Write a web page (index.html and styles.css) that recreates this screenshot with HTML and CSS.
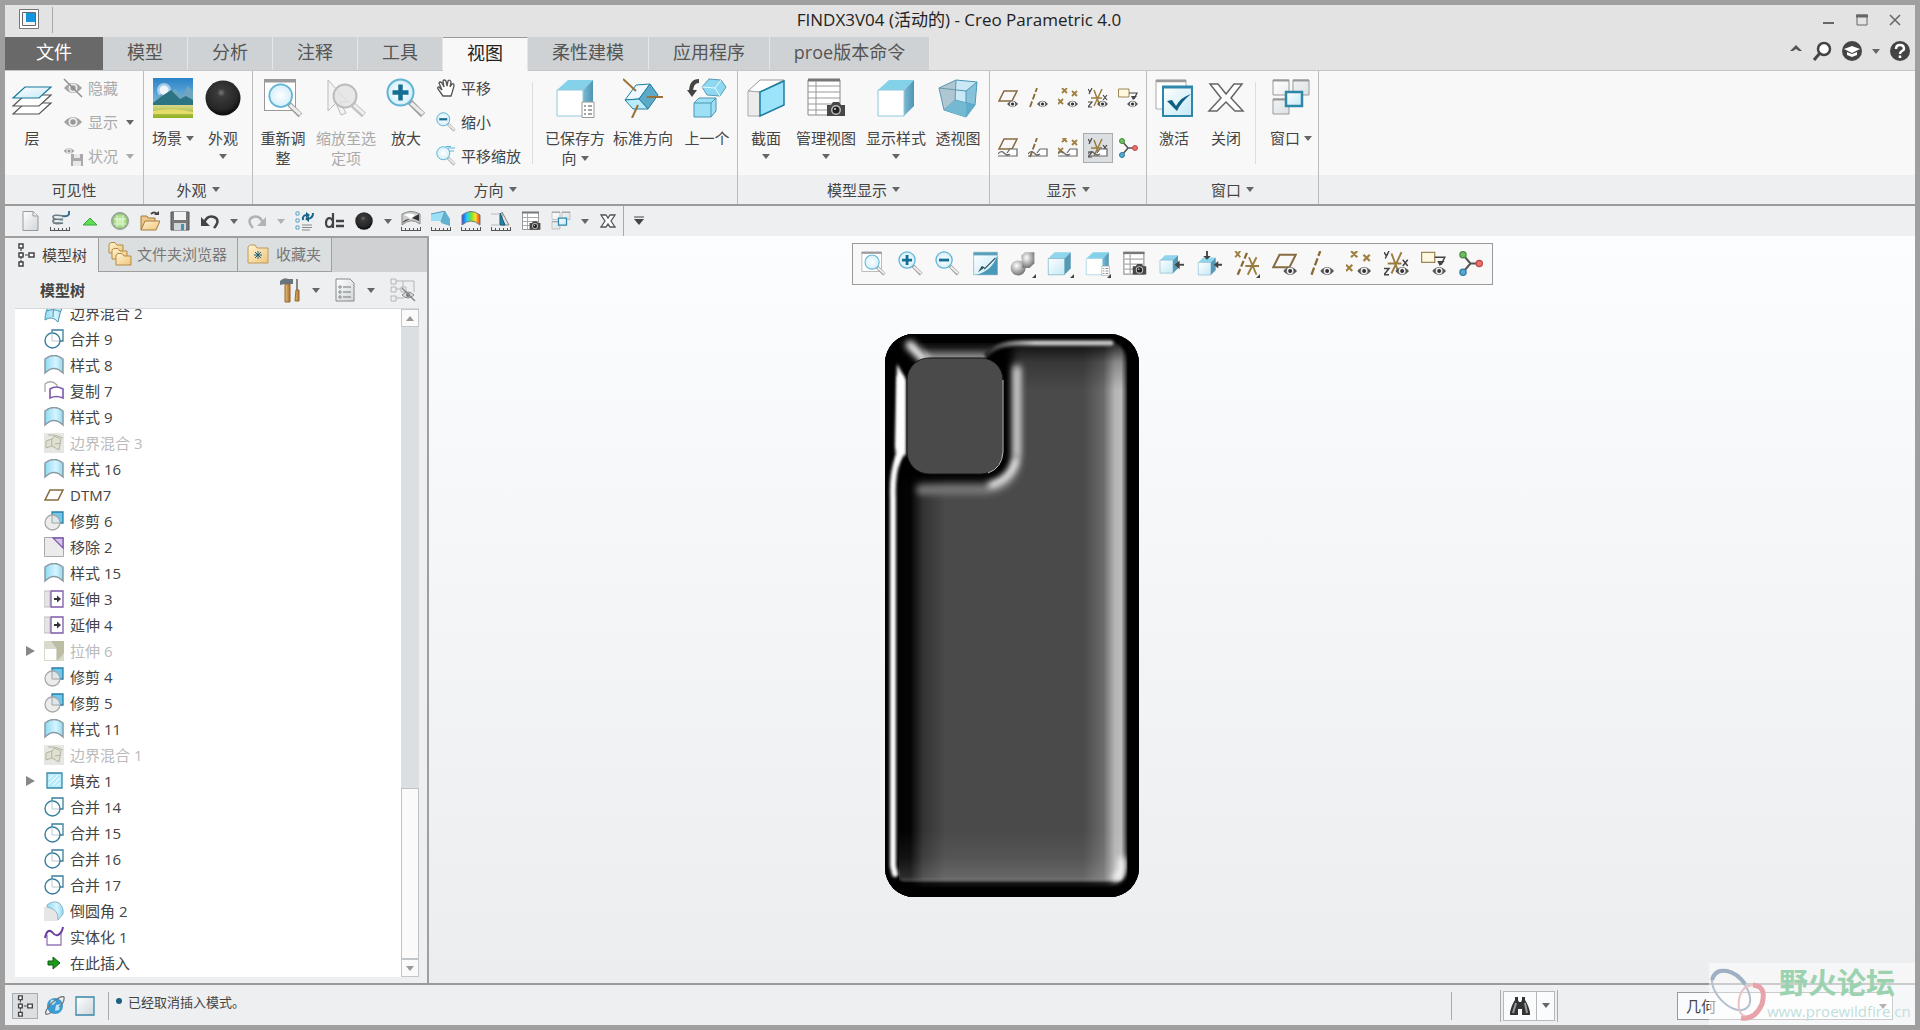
FILE: index.html
```html
<!DOCTYPE html>
<html lang="zh-CN">
<head>
    <meta charset="UTF-8">
    <meta name="viewport" content="width=device-width, initial-scale=1.0">
    <title>FINDX3V04 (活动的) - Creo Parametric 4.0</title>
    <link rel="stylesheet" href="styles.css">
</head>
<body>

<!-- icon sprite -->
<svg class="sprite" aria-hidden="true">
    <defs>
        <linearGradient id="g-blue" x1="0" y1="0" x2="1" y2="1"><stop offset="0" stop-color="#7fcfec"/><stop offset="1" stop-color="#e4f8ff"/></linearGradient>
        <linearGradient id="g-pale" x1="0" y1="0" x2="1" y2="1"><stop offset="0" stop-color="#fff"/><stop offset="1" stop-color="#c4e8f6"/></linearGradient>
        <linearGradient id="g-side" x1="0" y1="0" x2="1" y2="0"><stop offset="0" stop-color="#7db9d2"/><stop offset="1" stop-color="#4b95b5"/></linearGradient>
        <linearGradient id="g-page" x1="0" y1="0" x2="1" y2="1"><stop offset="0" stop-color="#fff"/><stop offset="1" stop-color="#cfd6db"/></linearGradient>
        <linearGradient id="g-sky" x1="0" y1="0" x2="0" y2="1"><stop offset="0" stop-color="#2b83c6"/><stop offset="1" stop-color="#a8d8f2"/></linearGradient>
        <linearGradient id="g-grass" x1="0" y1="0" x2="0" y2="1"><stop offset="0" stop-color="#d9d98a"/><stop offset="1" stop-color="#8fb020"/></linearGradient>
        <linearGradient id="g-rain" x1="0" y1="0" x2="1" y2="0"><stop offset="0" stop-color="#2a45ff"/><stop offset=".3" stop-color="#22d4f0"/><stop offset=".5" stop-color="#6de23c"/><stop offset=".75" stop-color="#ffe11a"/><stop offset="1" stop-color="#f0352a"/></linearGradient>
        <linearGradient id="g-wood" x1="0" y1="0" x2="1" y2="0"><stop offset="0" stop-color="#e9bf7c"/><stop offset="1" stop-color="#a8702a"/></linearGradient>
        <linearGradient id="g-folder" x1="0" y1="0" x2="1" y2="1"><stop offset="0" stop-color="#fff3d2"/><stop offset="1" stop-color="#efc67c"/></linearGradient>
        <linearGradient id="g-style" x1="0" y1="0" x2="1" y2="0"><stop offset="0" stop-color="#8edaf3"/><stop offset=".6" stop-color="#d8f5ff"/><stop offset="1" stop-color="#8edaf3"/></linearGradient>
        <radialGradient id="g-ball" cx=".45" cy=".35" r=".6"><stop offset="0" stop-color="#777"/><stop offset=".2" stop-color="#3a3a3a"/><stop offset=".8" stop-color="#262626"/><stop offset="1" stop-color="#111"/></radialGradient>
        <radialGradient id="g-green"><stop offset="0" stop-color="#d9f5bd"/><stop offset=".7" stop-color="#a3dc85"/><stop offset="1" stop-color="#8f9c8a"/></radialGradient>
        <radialGradient id="g-lens"><stop offset="0" stop-color="#fff"/><stop offset="1" stop-color="#d4effa"/></radialGradient>
        <radialGradient id="g-metal" cx=".4" cy=".35" r=".7"><stop offset="0" stop-color="#fff"/><stop offset="1" stop-color="#6d6d6d"/></radialGradient>
    </defs>

    <!-- shared parts -->
    <symbol id="p-eye" viewBox="0 0 12 8"><path d="M0 4Q6-3 12 4Q6 11 0 4z" fill="#555"/><circle cx="6" cy="4" r="3" fill="#eee"/><circle cx="6" cy="4" r="1.7" fill="#333"/></symbol>
    <symbol id="p-tag" viewBox="0 0 20 10"><path d="M9 8H19V1H12L9 5z" fill="#fff"/><path d="M0 6Q3 2 6 5T12 6M0 8H19V1H12L9 5" fill="none" stroke="#666" stroke-width="1.200"/></symbol>
    <symbol id="p-ruler" viewBox="0 0 20 4"><path d="M0 3.500H20M.5 0V4M4.500 1V4M8.500 1V4M12.500 1V4M16.500 1V4M19.500 0V4" stroke="#555" fill="none"/></symbol>
    <symbol id="p-cam" viewBox="0 0 20 16"><path d="M1 4H5L7 1H13L15 4H19V15H1z" fill="#484848"/><circle cx="10" cy="9" r="5" fill="#bbb"/><circle cx="10" cy="9" r="3.500" fill="#222"/><circle cx="9" cy="8" r="1" fill="#ddd"/></symbol>

    <!-- ribbon, large -->
    <symbol id="i-layers" viewBox="0 0 40 40"><g stroke="#555" stroke-width="1.200"><path d="M1 36L13 25H39L27 36z" fill="#fff"/><path d="M1 28L13 17H39L27 28z" fill="#fff"/><path d="M1 20L13 9H39L27 20z" fill="url(#g-pale)" stroke="#16789c"/></g></symbol>
    <symbol id="i-scene" viewBox="0 0 40 40"><rect width="40" height="40" fill="url(#g-sky)"/><circle cx="11" cy="12" r="7" fill="#fff" opacity=".5"/><circle cx="11" cy="12" r="4.500" fill="#fff" opacity=".8"/><path d="M0 24L8 16L14 20L22 11L29 18L35 8L40 13V28H0z" fill="#6fa5c0"/><path d="M0 25L9 18L18 12L27 21L33 18L40 22V30H0z" fill="#2c7384"/><rect y="27" width="40" height="13" fill="url(#g-grass)"/><path d="M0 33Q20 29 40 34V36H0z" fill="#e5dc6a"/></symbol>
    <symbol id="i-ball" viewBox="0 0 40 40"><circle cx="20" cy="20" r="17.500" fill="url(#g-ball)"/></symbol>
    <symbol id="i-glass" viewBox="0 0 40 40"><path d="M24 24L37 37" stroke="#999" stroke-width="6"/><path d="M25 25L37 36" stroke="#ececec" stroke-width="3.500"/><circle cx="14.500" cy="14.500" r="13" fill="url(#g-lens)" stroke="#62b4d4" stroke-width="2"/></symbol>
    <symbol id="i-refit" viewBox="0 0 40 40"><rect x="1.500" y="1.500" width="31" height="31" fill="#fff" stroke="#999"/><path d="M1 3H33" stroke="#999" stroke-width="3"/><use href="#i-glass" x="5" y="5" width="35" height="35"/></symbol>
    <symbol id="i-zoomsel" viewBox="0 0 40 40"><path d="M2 2V33L10 25L15 37L20 35L14 24H22z" fill="#f3f3f3" stroke="#bbb"/><path d="M27 27L38 37" stroke="#c2c2c2" stroke-width="6"/><path d="M28 27L38 36" stroke="#f0f0f0" stroke-width="3"/><circle cx="19" cy="18" r="11.500" fill="#e2e2e2" fill-opacity=".8" stroke="#bbb" stroke-width="2"/></symbol>
    <symbol id="i-zoomin" viewBox="0 0 40 40"><use href="#i-glass" width="40" height="40"/><path d="M14.500 6.500V22.500M6.500 14.500H22.500" stroke="#146f93" stroke-width="4.500"/></symbol>
    <symbol id="i-zoomout" viewBox="0 0 40 40"><use href="#i-glass" width="40" height="40"/><path d="M6.500 14.500H22.500" stroke="#146f93" stroke-width="4.500"/></symbol>
    <symbol id="i-panzoom" viewBox="0 0 40 40"><use href="#i-glass" width="40" height="40"/><path d="M24 4H38M27 10H36M20 1H30" stroke="#5bb1d8" stroke-width="2"/></symbol>
    <symbol id="i-cube" viewBox="0 0 40 40"><path d="M2 12L13 2H38L28 12z" fill="#84d1ea"/><path d="M28 12L38 2V28L28 38z" fill="url(#g-side)"/><path d="M2 12H28V38H2z" fill="#fff" stroke="#8fc9de"/></symbol>
    <symbol id="i-saved" viewBox="0 0 40 40"><use href="#i-cube" width="40" height="40"/><path d="M27 24H39V39.500H27z" fill="#fff" stroke="#999"/><path d="M29 28H31M33 28H37M29 32H31M33 32H37M29 36H31M33 36H37" stroke="#888" stroke-width="1.500"/></symbol>
    <symbol id="i-orient" viewBox="0 0 40 40"><path d="M2 22L13 7L27 6L16 21z" fill="#eefaff" stroke="#1c7fa3"/><path d="M16 21L27 6L35 17L25 31z" fill="#5da9c8" stroke="#1c7fa3"/><path d="M2 22L16 21L25 31L10 31z" fill="#b9ebfa" stroke="#1c7fa3"/><path d="M0 1L13 13M24 19H40M15 27L9 40" stroke="#9a7236" stroke-width="2"/></symbol>
    <symbol id="i-prev" viewBox="0 0 40 40"><path d="M12 3Q4 3 4 14" fill="none" stroke="#444" stroke-width="4"/><path d="M0 12H10L5 19z" fill="#444"/><path d="M15 9L22 1L34 2L39 9L33 18L20 17z" fill="#8fd8f2" stroke="#5a9ab5"/><path d="M15 9L28 10L34 2M28 10L33 18" fill="none" stroke="#e8faff"/><path d="M7 25L12 20H29V33L24 39H7z" fill="#9ddff5" stroke="#4b95b5"/><path d="M7 25H24L29 20M24 25V39" stroke="#4b95b5" fill="none"/></symbol>
    <symbol id="i-section" viewBox="0 0 40 40"><path d="M2 13L14 2H38L14 14z" fill="#fff" stroke="#999"/><path d="M2 13L14 14V38H2z" fill="#ececec" stroke="#aaa"/><path d="M14 14L38 3V27L14 38z" fill="#9be4fa" stroke="#1c7fa3" stroke-width="1.500"/></symbol>
    <symbol id="i-views" viewBox="0 0 40 40"><path d="M2 2H34V37H2z" fill="#fff" stroke="#888"/><path d="M2 2H34" stroke="#777" stroke-width="3"/><path d="M2 8H34M2 14H34M2 20H34M2 26H34M2 32H34M10 3V37" stroke="#999"/><use href="#p-cam" x="20" y="23" width="20" height="16"/></symbol>
    <symbol id="i-viewsmall" viewBox="0 0 20 20"><path d="M1.500 1.500H17.500V18.500H1.500z" fill="#fff" stroke="#999"/><path d="M1 1.500H18" stroke="#777" stroke-width="2"/><path d="M2 6.500H17M2 10.500H17M2 14.500H17M6.500 2V18" stroke="#aaa"/><use href="#p-cam" x="8" y="9" width="12" height="11"/></symbol>
    <symbol id="i-persp" viewBox="0 0 40 40"><path d="M1 10L18 2L39 4L37 27L28 39L6 32z" fill="#cbe9f4" stroke="#4b95b5"/><path d="M1 10L28 13L39 4M28 13V39M18 2L17 22L6 32M17 22L37 27" fill="none" stroke="#4b95b5"/><path d="M1 10L18 2V22L6 32z" fill="#8b9ea8" opacity=".45"/><path d="M6 32L17 22L37 27L28 39z" fill="#74b8d2"/><path d="M28 13L39 4L37 27L28 39z" fill="#4ea3c4" opacity=".55"/></symbol>
    <symbol id="i-activate" viewBox="0 0 40 40"><path d="M2 2H32V31H2z" fill="#fff" stroke="#aaa"/><path d="M2 3H32" stroke="#999" stroke-width="2.500"/><path d="M9 9H38V38H9z" fill="url(#g-pale)" stroke="#2c87a9" stroke-width="2"/><path d="M8 9H39" stroke="#2c87a9" stroke-width="3"/><path d="M13 23L18 22L22 28Q27 19 37 16Q27 24 23 33z" fill="#0d5f87"/></symbol>
    <symbol id="i-close" viewBox="0 0 40 40"><path d="M4 6H12L20 16L28 6H36L25 20L37 33H29L20 24L11 33H3L15 20z" fill="#fff" stroke="#666" stroke-width="1.500"/></symbol>
    <symbol id="i-windows" viewBox="0 0 40 40"><g fill="url(#g-page)" stroke="#999"><path d="M2 2H18V17H2zM22 2H38V17H22zM2 21H18V36H2z"/></g><path d="M2 2.500H18M22 2.500H38M2 21.500H18" stroke="#999" stroke-width="2"/><path d="M15 14H31V28H15z" fill="url(#g-pale)" stroke="#2c87a9" stroke-width="2.500"/></symbol>

    <!-- ribbon, small -->
    <symbol id="i-eye" viewBox="0 0 20 20"><path d="M1 10Q10 0 19 10Q10 20 1 10z" fill="#a2a2a2"/><circle cx="10" cy="10" r="4.500" fill="#eee"/><circle cx="10" cy="10" r="2.700" fill="#999"/></symbol>
    <symbol id="i-eyeoff" viewBox="0 0 20 20"><use href="#i-eye" width="20" height="20"/><path d="M1 1L19 19" stroke="#8c8c8c" stroke-width="1.500"/></symbol>
    <symbol id="i-eyesave" viewBox="0 0 20 20"><use href="#i-eye" x="0" y="-1" width="12" height="12"/><path d="M8 8H20V20H8z" fill="#aaa"/><path d="M11 8H17V12H11zM10 15H18V20H10z" fill="#e8e8e8"/></symbol>
    <symbol id="i-hand" viewBox="0 0 20 20"><path d="M7 18L2 11Q1 9 3 9L6 12L3 5Q4 3 6 5L8 9L7 3Q8 1 10 3L11 8L12 3Q14 1 15 4L14 9L16 6Q18 5 18 8L16 15L15 18z" fill="#fff" stroke="#555" stroke-width="1.300"/></symbol>
    <symbol id="i-plane" viewBox="0 0 20 20"><path d="M1 15L6 5H19L14 15z" fill="none" stroke="#876c43" stroke-width="1.600"/></symbol>
    <symbol id="i-axis" viewBox="0 0 20 20"><path d="M2 19L9 0" stroke="#876830" stroke-width="1.800" stroke-dasharray="6 2"/></symbol>
    <symbol id="i-points" viewBox="0 0 20 20"><path d="M4 0L9 5M9 0L4 5M14 3L19 8M19 3L14 8M0 11L5 16M5 11L0 16" stroke="#a08040" stroke-width="1.800"/></symbol>
    <symbol id="i-csys" viewBox="0 0 20 20"><path d="M3 10H14M6 2L12 18M14 1L6 18" stroke="#9a7d3e" stroke-width="1.500"/><path d="M0 1L2 4M4 0L1 6M15 7L19 12M19 7L15 12M0 14H4L0 19H4" fill="none" stroke="#444" stroke-width="1.200"/></symbol>
    <symbol id="i-planeeye" viewBox="0 0 20 20"><use href="#i-plane" y="-2" width="20" height="20"/><use href="#p-eye" x="9" y="12" width="11" height="8"/></symbol>
    <symbol id="i-axiseye" viewBox="0 0 20 20"><use href="#i-axis" width="20" height="20"/><use href="#p-eye" x="9" y="12" width="11" height="8"/></symbol>
    <symbol id="i-pointeye" viewBox="0 0 20 20"><use href="#i-points" width="20" height="20"/><use href="#p-eye" x="9" y="12" width="11" height="8"/></symbol>
    <symbol id="i-csyseye" viewBox="0 0 20 20"><use href="#i-csys" width="20" height="20"/><use href="#p-eye" x="9" y="12" width="11" height="8"/></symbol>
    <symbol id="i-noteeye" viewBox="0 0 20 20"><path d="M.5 1H11V9H.5z" fill="#fff8df" stroke="#9d865a"/><path d="M11 5H19L16 11" fill="none" stroke="#444" stroke-width="1.200"/><path d="M13 8L19 8L15 12z" fill="#444"/><use href="#p-eye" x="9" y="12" width="11" height="8"/></symbol>
    <symbol id="i-planetag" viewBox="0 0 20 20"><use href="#i-plane" y="-4" width="20" height="20"/><use href="#p-tag" y="10" width="20" height="10"/></symbol>
    <symbol id="i-axistag" viewBox="0 0 20 20"><use href="#i-axis" width="20" height="20"/><use href="#p-tag" y="10" width="20" height="10"/></symbol>
    <symbol id="i-pointtag" viewBox="0 0 20 20"><use href="#i-points" y="-1" width="20" height="20"/><use href="#p-tag" y="10" width="20" height="10"/></symbol>
    <symbol id="i-csystag" viewBox="0 0 20 20"><use href="#i-csys" width="20" height="20"/><use href="#p-tag" y="10" width="20" height="10"/></symbol>
    <symbol id="i-triad" viewBox="0 0 20 20"><path d="M4 3L10 10L4 17M10 10H17" fill="none" stroke="#555" stroke-width="1.600"/><circle cx="4" cy="3" r="2.500" fill="#6fbd63" stroke="#478c3e"/><circle cx="4" cy="17" r="2.500" fill="#57a9cf" stroke="#2f7da0"/><circle cx="17" cy="10" r="2.500" fill="#ee6e6a" stroke="#b84a46"/></symbol>

    <!-- quick access -->
    <symbol id="i-new" viewBox="0 0 20 20"><path d="M3 .5H13L18 5V19.500H3z" fill="url(#g-page)" stroke="#999"/><path d="M13 .5V5H18" fill="#eee" stroke="#999"/></symbol>
    <symbol id="i-spring" viewBox="0 0 20 20"><use href="#p-ruler" y="16" width="20" height="4"/><path d="M19 0V3Q18 6 12 5" fill="none" stroke="#39728c" stroke-width="2"/><path d="M14 5Q3 3 3 6T13 8M13 9Q2 7 3 10.500T13 12H3" fill="none" stroke="#6a7d86" stroke-width="1.600"/></symbol>
    <symbol id="i-up" viewBox="0 0 20 20"><path d="M3 14L10 7L17 14z" fill="#5fdd55" stroke="#36a83c"/></symbol>
    <symbol id="i-greenball" viewBox="0 0 20 20"><circle cx="10" cy="10" r="8.500" fill="url(#g-green)" stroke="#98a295"/><path d="M7 4V16M13 4V16M4 8H16M4 13H16" stroke="#fff" opacity=".45" stroke-width="1.500"/></symbol>
    <symbol id="i-open" viewBox="0 0 20 20"><path d="M1 19V5H7L8 7H15V11" fill="#efc98b" stroke="#a57a3c"/><path d="M1 19L5 10H20L16 19z" fill="url(#g-folder)" stroke="#a57a3c"/><path d="M11 3Q14 0 17 3" fill="none" stroke="#444" stroke-width="1.800"/><path d="M14 4H19V0z" fill="#444"/></symbol>
    <symbol id="i-save" viewBox="0 0 20 20"><path d="M1 1H19V19H1z" fill="#777" stroke="#555"/><path d="M4 1H16V9H4z" fill="#f2f2f2"/><path d="M4 12H16V19H4z" fill="#cfd6da"/><path d="M11 13H14V19H11z" fill="#4192b4"/></symbol>
    <symbol id="i-undo" viewBox="0 0 20 20"><path d="M4 12Q7 4 14 6Q21 9 14 17" fill="none" stroke="currentColor" stroke-width="2.500"/><path d="M1 6V15H10z" fill="currentColor"/></symbol>
    <symbol id="i-regen" viewBox="0 0 20 20"><path d="M2 1H5V4H2zM2 8H5V11H2zM2 15H5V18H2z" fill="#fff" stroke="#5b9fc0"/><path d="M8 14H18M8 16.500H18M8 19H16" stroke="#888"/><path d="M9 9Q8 4 13 4M19 2Q19 7 14 8" fill="none" stroke="#19658a" stroke-width="2"/><path d="M12 1L16 4L12 7zM15 5L11 8L15 11z" fill="#19658a"/></symbol>
    <symbol id="i-deq" viewBox="0 0 20 20"><path d="M9 2V17M9 11Q8 7 5 7Q2 8 2 12T5 16Q8 16 9 12" fill="none" stroke="#444" stroke-width="2.200"/><path d="M12 10H20M12 15H20" stroke="#444" stroke-width="2.400"/></symbol>
    <symbol id="i-an1" viewBox="0 0 20 20"><use href="#p-ruler" y="16" width="20" height="4"/><path d="M1 14V3Q10-2 19 3V13Q10 6 1 14z" fill="#ccc" stroke="#888"/><path d="M3 4Q9 1 14 4L10 8Q6 5 3 4z" fill="#fff"/><path d="M11 7L18 3V10zM1 12Q4 8 9 8L3 11z" fill="#333"/></symbol>
    <symbol id="i-an2" viewBox="0 0 20 20"><use href="#p-ruler" y="16" width="20" height="4"/><path d="M0 3L14 0L10 10H0z" fill="#9be0f7"/><path d="M14 0L19 8V15L10 12z" fill="#62b1d1"/><path d="M0 3L14 0L10 11" fill="none" stroke="#5a9ab5"/></symbol>
    <symbol id="i-an3" viewBox="0 0 20 20"><use href="#p-ruler" y="16" width="20" height="4"/><path d="M1 14V4Q10-3 19 4V14Q10 6 1 14z" fill="url(#g-rain)" stroke="#777"/></symbol>
    <symbol id="i-an4" viewBox="0 0 20 20"><use href="#p-ruler" y="16" width="20" height="4"/><path d="M11 1L18 14H11z" fill="#e3e3e3" stroke="#888"/><path d="M9 2V14H14z" fill="#2384a8" stroke="#125b78"/><path d="M0 3H9M0 14H9" stroke="#bbb"/></symbol>
    <symbol id="i-xsmall" viewBox="0 0 20 20"><path d="M3 4H8L10 7L12 4H17L13 10L17 16H12L10 13L8 16H3L7 10z" fill="#fff" stroke="#555" stroke-width="1.300"/></symbol>

    <!-- graphics toolbar -->
    <symbol id="i-repaint" viewBox="0 0 40 40"><path d="M1 2H39V38H1z" fill="url(#g-pale)" stroke="#7aa9bb"/><path d="M1 2H39V7H1z" fill="#5ba0ba"/><path d="M39 7V38H5Q30 32 39 7z" fill="#4799b8"/><path d="M36 11L18 29" stroke="#274d5b" stroke-width="2"/><path d="M19 26L8 34L14 24z" fill="#274d5b"/></symbol>
    <symbol id="i-shade" viewBox="0 0 40 40"><circle cx="13" cy="27" r="12" fill="url(#g-metal)"/><path d="M18 7L24 2H39V20L31 27H20z" fill="url(#g-metal)"/></symbol>
    <symbol id="i-bluecube" viewBox="0 0 40 40"><path d="M2 12L12 2H38L28 12z" fill="#8ed5ed"/><path d="M28 12L38 2V28L28 38z" fill="#5599b5"/><path d="M2 12H28V38H2z" fill="url(#g-pale)" stroke="#67a6be"/></symbol>
    <symbol id="i-cubein" viewBox="0 0 40 40"><use href="#i-bluecube" y="3" width="32" height="36"/><path d="M40 22H32" stroke="#444" stroke-width="3"/><path d="M33 15V29L25 22z" fill="#444"/></symbol>
    <symbol id="i-cubein2" viewBox="0 0 40 40"><use href="#i-bluecube" y="9" width="32" height="31"/><path d="M40 22H33M16 0V8" stroke="#444" stroke-width="3"/><path d="M34 16V28L27 22zM10 8H22L16 14z" fill="#444"/></symbol>
    <symbol id="i-datums" viewBox="0 0 20 20"><path d="M1 0L5 5M5 0L1 5" stroke="#a08040" stroke-width="1.600"/><path d="M3 19L11 0" stroke="#876830" stroke-width="1.800" stroke-dasharray="5 2"/><path d="M9 12H20M12 5L18 19M18 5L11 19" stroke="#9a7d3e" stroke-width="1.500"/></symbol>

    <!-- navigator -->
    <symbol id="i-tree" viewBox="0 0 20 24"><path d="M5 5V19M5 12H13" stroke="#444" stroke-width="1.200" stroke-dasharray="3 1"/><path d="M3 1H7V5H3zM3 10H7V14H3zM3 19H7V23H3zM13 10H18V14H13z" fill="#fff" stroke="#444" stroke-width="1.500"/></symbol>
    <symbol id="i-folders" viewBox="0 0 24 24"><g fill="url(#g-folder)" stroke="#b58a47"><path d="M1 11V2L3 .5H7L9 3H15V11z"/><path d="M4 17V8L6 6.500H10L12 9H19V17z"/><path d="M8 23V13L10 11.500H14L16 14H23V23z"/></g></symbol>
    <symbol id="i-fav" viewBox="0 0 22 20"><path d="M1 19V3L3 1H8L10 4H21V19z" fill="url(#g-folder)" stroke="#c09a5c"/><path d="M11 7V15M7 11H15M8 8L14 14M14 8L8 14" stroke="#17607f"/></symbol>
    <symbol id="i-tools" viewBox="0 0 20 24"><path d="M5 6H10V24H5z" fill="url(#g-wood)" stroke="#94682f"/><path d="M0 3Q4-1 8 1H13V6H5L0 7z" fill="#67757e"/><path d="M17 1V12" stroke="#888" stroke-width="2"/><path d="M16 12H19V23H15z" fill="url(#g-wood)" stroke="#94682f"/></symbol>
    <symbol id="i-list" viewBox="0 0 20 24"><path d="M1 1H15L19 5V23H1z" fill="url(#g-page)" stroke="#888"/><path d="M8 9H16M8 14H16M8 19H16" stroke="#777"/><path d="M4 8H6V10H4zM4 13H6V15H4zM4 18H6V20H4z" fill="#fff" stroke="#888"/></symbol>
    <symbol id="i-hidetree" viewBox="0 0 26 24"><g fill="none" stroke="#b5b5b5"><path d="M1 1H6V6H1zM1 9H6V14H1zM1 18H6V23H1zM11 9H16V14H11zM6 3H24V14M6 11H11M6 20H14M13 3V9"/></g><path d="M12 17Q18 11 24 17Q18 23 12 17z" fill="#ddd" stroke="#888"/><circle cx="18" cy="17" r="2" fill="#777"/><path d="M12 10L25 23" stroke="#888" stroke-width="1.500"/></symbol>
    <symbol id="i-boundary" viewBox="0 0 20 20"><path d="M1 17Q1 7 6 2L19 3Q16 8 14 19Q8 12 1 17z" fill="url(#g-style)" stroke="#4b95b5"/><path d="M12 2Q8 8 9 14M3 8Q10 5 17 9" fill="none" stroke="#4b95b5"/></symbol>
    <symbol id="i-boundaryoff" viewBox="0 0 20 20"><rect width="20" height="20" fill="#e6e6e2"/><path d="M2 8L8 6L10 3L17 6L15 17L8 13L2 15z" fill="#dfe0cf" stroke="#b5b5a2"/><path d="M8 6Q7 9 8 13M4 2Q12 1 19 5M11 11L17 10" fill="none" stroke="#b5b5a2"/></symbol>
    <symbol id="i-merge" viewBox="0 0 20 20"><path d="M8 4V1H19V12H16" fill="#fff" stroke="#3a7e9c" stroke-width="1.300"/><circle cx="8.500" cy="11.500" r="7.500" fill="#fff" stroke="#3a7e9c" stroke-width="1.400"/><path d="M8 4V12H15" fill="none" stroke="#bcc8ce"/></symbol>
    <symbol id="i-style" viewBox="0 0 20 20"><path d="M1 4Q10-3 19 4V18Q10 9 1 18z" fill="url(#g-style)" stroke="#8b9ba4" stroke-width="1.500"/></symbol>
    <symbol id="i-copy" viewBox="0 0 20 20"><path d="M1 11V3Q7-2 13 4V8" fill="none" stroke="#aaa" stroke-width="1.300"/><path d="M6 8Q12 4 19 8V17Q12 14 6 17z" fill="#fff" stroke="#7d5aa8" stroke-width="1.600"/></symbol>
    <symbol id="i-trim" viewBox="0 0 20 20"><path d="M8 1H19V12H8z" fill="#6bc8ee" stroke="#2c7fa3" stroke-width="1.300"/><circle cx="8.500" cy="11.500" r="7.500" fill="#eaeaea" fill-opacity=".9" stroke="#aaa" stroke-width="1.300"/><path d="M8 4V12H15" fill="none" stroke="#aaa"/></symbol>
    <symbol id="i-remove" viewBox="0 0 20 20"><path d="M.5 .5H19.500V19.500H.5z" fill="#ebebeb" stroke="#aaa"/><path d="M9 1H19V11z" fill="#d6c5ea" stroke="#7d5aa8" stroke-width="1.300"/></symbol>
    <symbol id="i-extend" viewBox="0 0 20 20"><path d="M0 2H6V18H0z" fill="#e4e4e4" stroke="#bbb"/><path d="M7 2H19V18H7z" fill="#fff" stroke="#7d5aa8" stroke-width="1.300"/><path d="M10 10H14" stroke="#333" stroke-width="2"/><path d="M13 6.500V13.500L17 10z" fill="#333"/></symbol>
    <symbol id="i-extrudeoff" viewBox="0 0 20 20"><rect width="20" height="20" fill="#d9d9cc"/><path d="M7 0H20V12L13 20V8z" fill="#bdbda4"/><path d="M1 8H12V19H1z" fill="#fff"/></symbol>
    <symbol id="i-fill" viewBox="0 0 20 20"><path d="M3 2H18V17H3z" fill="#b8ecfb" stroke="#3787a7" stroke-width="1.300"/><path d="M5 8L9 4M5 13L14 4M9 14L16 7M13 15L16 12" stroke="#fff"/></symbol>
    <symbol id="i-round" viewBox="0 0 20 20"><path d="M0 6H8Q14 8 14 20H0z" fill="#e6e6e6"/><path d="M3 4Q9-1 15 2Q20 6 19 13L14 19Q15 8 3 6z" fill="url(#g-style)" stroke="#8ab5c8"/></symbol>
    <symbol id="i-solid" viewBox="0 0 20 20"><path d="M3 8V18H17V5" fill="#fff" stroke="#9678b8" stroke-width="1.300"/><path d="M1 11Q3 1 8 5Q11 9 14 8Q18 6 19 0" fill="none" stroke="#6b3fa0" stroke-width="2"/></symbol>
    <symbol id="i-insert" viewBox="0 0 20 20"><path d="M4 8H9V4L16 10L9 16V12H4z" fill="#1c9a1c" stroke="#0e5d0e"/></symbol>

    <!-- status bar, window -->
    <symbol id="i-globe" viewBox="0 0 20 20"><circle cx="10" cy="10" r="8" fill="#3a9cd4"/><path d="M6 4Q10 3 11 6L8 9L5 8zM11 9L16 8L14 14L10 15z" fill="#bfe6f8"/><path d="M7 16Q-1 21 1 15Q4 8 12 3T19 3Q19 7 14 11" fill="none" stroke="#777" stroke-width="1.300"/></symbol>
    <symbol id="i-browser" viewBox="0 0 20 20"><path d="M1 1H19V19H1z" fill="url(#g-page)" stroke="#3787a7" stroke-width="1.300"/></symbol>
    <symbol id="i-binoc" viewBox="0 0 20 20"><path d="M5 1H8V4L9 6H11L12 4V1H15V4Q18 8 20 16V19H12V13H8V19H0V16Q2 8 5 4z" fill="#333"/><path d="M3 17L6 7M15 7L17 17" stroke="#999" stroke-width="2"/></symbol>
    <symbol id="i-search" viewBox="0 0 20 20"><circle cx="12" cy="8" r="6" fill="#fff" stroke="#444" stroke-width="2.500"/><path d="M8 12L2 19" stroke="#444" stroke-width="3"/></symbol>
    <symbol id="i-learn" viewBox="0 0 20 20"><circle cx="10" cy="10" r="10" fill="#444"/><path d="M2 8L10 5L18 8L10 12z" fill="#fff"/><path d="M5 11L10 13L15 11V14L10 16L5 14z" fill="#fff"/></symbol>
    <symbol id="i-help" viewBox="0 0 20 20"><circle cx="10" cy="10" r="10" fill="#444"/><path d="M6 8Q6 4 10 4T14 8Q14 9 12 10T10 13" fill="none" stroke="#fff" stroke-width="2.500"/><path d="M8.700 14.500H11.300V17H8.700z" fill="#fff"/></symbol>
    <symbol id="i-app" viewBox="0 0 20 20"><path d="M.5 .5H19.500V19.500H.5z" fill="#fff" stroke="#777"/><path d="M3.500 3.500H16.500V16.500H3.500z" fill="#f5f5f5" stroke="#666"/><path d="M7 4H16V13H7z" fill="#1795dc"/></symbol>
</svg>

<div class="window">
    <header class="titlebar">
        <span class="app-icon"><svg width="20" height="20"><use href="#i-app"/></svg></span>
        <h1>FINDX3V04 (活动的) - Creo Parametric 4.0</h1>
        <div class="window-buttons">
            <button aria-label="最小化"><svg width="12" height="12"><path d="M0 9H11" stroke="#666" stroke-width="2"/></svg></button>
            <button aria-label="最大化"><svg width="12" height="12"><path d="M1 1H11V11H1z" fill="none" stroke="#666"/><path d="M0 2H12" stroke="#666" stroke-width="3"/></svg></button>
            <button aria-label="关闭"><svg width="12" height="12"><path d="M1 1L11 11M11 1L1 11" stroke="#666" stroke-width="1.500"/></svg></button>
        </div>
    </header>

    <nav class="tabs">
        <button class="tab tab-file">文件</button>
        <button class="tab">模型</button>
        <button class="tab">分析</button>
        <button class="tab">注释</button>
        <button class="tab">工具</button>
        <button class="tab active">视图</button>
        <button class="tab tab-wide">柔性建模</button>
        <button class="tab tab-wide">应用程序</button>
        <button class="tab tab-long">proe版本命令</button>
        <div class="tab-tools">
            <button aria-label="折叠"><svg width="12" height="20"><path d="M0 10L6 4L12 10H9L6 8L3 10z" fill="#555"/></svg></button>
            <button aria-label="搜索"><svg width="20" height="20"><use href="#i-search"/></svg></button>
            <button aria-label="学习"><svg width="20" height="20"><use href="#i-learn"/></svg></button>
            <i class="caret"></i>
            <button aria-label="帮助"><svg width="20" height="20"><use href="#i-help"/></svg></button>
        </div>
    </nav>

    <div class="ribbon">
        <section class="group">
            <div class="group-body">
                <button class="big w54"><svg><use href="#i-layers"/></svg><span>层</span></button>
                <div class="rows rows-vis">
                    <button disabled><svg><use href="#i-eyeoff"/></svg>隐藏</button>
                    <button disabled><svg><use href="#i-eye"/></svg>显示<i class="caret dark"></i></button>
                    <button disabled><svg><use href="#i-eyesave"/></svg>状况<i class="caret"></i></button>
                </div>
            </div>
            <h2>可见性</h2>
        </section>
        <section class="group">
            <div class="group-body group-look">
                <button class="big w50"><svg><use href="#i-scene"/></svg><span>场景<i class="caret"></i></span></button>
                <button class="big w50"><svg><use href="#i-ball"/></svg><span>外观</span><i class="caret below"></i></button>
            </div>
            <h2>外观<i class="caret"></i></h2>
        </section>
        <section class="group">
            <div class="group-body">
                <button class="big w60"><svg><use href="#i-refit"/></svg><span>重新调<br>整</span></button>
                <button class="big w66" disabled><svg><use href="#i-zoomsel"/></svg><span>缩放至选<br>定项</span></button>
                <button class="big w54"><svg><use href="#i-zoomin"/></svg><span>放大</span></button>
                <div class="rows rows-zoom">
                    <button><svg><use href="#i-hand"/></svg>平移</button>
                    <button><svg><use href="#i-zoomout"/></svg>缩小</button>
                    <button><svg><use href="#i-panzoom"/></svg>平移缩放</button>
                </div>
                <div class="divider"></div>
                <button class="big w68"><svg><use href="#i-saved"/></svg><span>已保存方<br>向<i class="caret"></i></span></button>
                <button class="big w68"><svg><use href="#i-orient"/></svg><span>标准方向</span></button>
                <button class="big w60"><svg><use href="#i-prev"/></svg><span>上一个</span></button>
            </div>
            <h2>方向<i class="caret"></i></h2>
        </section>
        <section class="group">
            <div class="group-body group-display">
                <button class="big w54"><svg><use href="#i-section"/></svg><span>截面</span><i class="caret below"></i></button>
                <button class="big w66"><svg><use href="#i-views"/></svg><span>管理视图</span><i class="caret below"></i></button>
                <button class="big w74"><svg><use href="#i-cube"/></svg><span>显示样式</span><i class="caret below"></i></button>
                <button class="big w50"><svg><use href="#i-persp"/></svg><span>透视图</span></button>
            </div>
            <h2>模型显示<i class="caret"></i></h2>
        </section>
        <section class="group">
            <div class="datum-grid">
                <button aria-label="平面显示"><svg><use href="#i-planeeye"/></svg></button>
                <button aria-label="轴显示"><svg><use href="#i-axiseye"/></svg></button>
                <button aria-label="点显示"><svg><use href="#i-pointeye"/></svg></button>
                <button aria-label="坐标系显示"><svg><use href="#i-csyseye"/></svg></button>
                <button aria-label="注释显示"><svg><use href="#i-noteeye"/></svg></button>
                <button aria-label="平面标记"><svg><use href="#i-planetag"/></svg></button>
                <button aria-label="轴标记"><svg><use href="#i-axistag"/></svg></button>
                <button aria-label="点标记"><svg><use href="#i-pointtag"/></svg></button>
                <button class="pressed" aria-label="坐标系标记"><svg><use href="#i-csystag"/></svg></button>
                <button aria-label="旋转中心"><svg><use href="#i-triad"/></svg></button>
            </div>
            <h2>显示<i class="caret"></i></h2>
        </section>
        <section class="group">
            <div class="group-body group-windows">
                <button class="big w54"><svg><use href="#i-activate"/></svg><span>激活</span></button>
                <button class="big w50"><svg><use href="#i-close"/></svg><span>关闭</span></button>
                <div class="divider"></div>
                <button class="big w54"><svg><use href="#i-windows"/></svg><span>窗口<i class="caret"></i></span></button>
            </div>
            <h2>窗口<i class="caret"></i></h2>
        </section>
        <div class="group filler"><div class="group-body"></div><h2></h2></div>
    </div>

    <div class="quickbar">
        <button aria-label="新建"><svg><use href="#i-new"/></svg></button>
        <button aria-label="测量"><svg><use href="#i-spring"/></svg></button>
        <button aria-label="向上"><svg><use href="#i-up"/></svg></button>
        <button aria-label="外观球"><svg><use href="#i-greenball"/></svg></button>
        <button aria-label="打开"><svg><use href="#i-open"/></svg></button>
        <button aria-label="保存"><svg><use href="#i-save"/></svg></button>
        <button aria-label="撤消"><svg><use href="#i-undo"/></svg></button>
        <button class="drop" aria-label="撤消列表"><i class="caret"></i></button>
        <button class="redo" aria-label="重做"><svg><use href="#i-undo"/></svg></button>
        <button class="drop redo" aria-label="重做列表"><i class="caret"></i></button>
        <button aria-label="重新生成"><svg><use href="#i-regen"/></svg></button>
        <button aria-label="关系"><svg><use href="#i-deq"/></svg></button>
        <button aria-label="外观"><svg><use href="#i-ball"/></svg></button>
        <button class="drop" aria-label="外观列表"><i class="caret"></i></button>
        <button aria-label="反射"><svg><use href="#i-an1"/></svg></button>
        <button aria-label="拔模"><svg><use href="#i-an2"/></svg></button>
        <button aria-label="曲率"><svg><use href="#i-an3"/></svg></button>
        <button aria-label="截面分析"><svg><use href="#i-an4"/></svg></button>
        <button aria-label="视图管理器"><svg><use href="#i-viewsmall"/></svg></button>
        <button aria-label="窗口"><svg><use href="#i-windows"/></svg></button>
        <button class="drop" aria-label="窗口列表"><i class="caret"></i></button>
        <button aria-label="关闭窗口"><svg><use href="#i-xsmall"/></svg></button>
        <button class="customize" aria-label="自定义"><svg><path d="M5 6H15" stroke="#444"/><path d="M5 8H15L10 14z" fill="#444"/></svg></button>
    </div>

    <main>
        <aside class="navigator">
            <div class="nav-tabs">
                <button class="nav-tab current"><svg width="20" height="24"><use href="#i-tree"/></svg>模型树</button>
                <button class="nav-tab nav-folders"><svg width="24" height="24"><use href="#i-folders"/></svg>文件夹浏览器</button>
                <button class="nav-tab nav-fav"><svg width="22" height="20"><use href="#i-fav"/></svg>收藏夹</button>
            </div>
            <div class="nav-head">
                <h3>模型树</h3>
                <button aria-label="设置"><svg width="20" height="26"><use href="#i-tools"/></svg><i class="caret"></i></button>
                <button aria-label="显示"><svg width="20" height="26"><use href="#i-list"/></svg><i class="caret"></i></button>
                <button aria-label="隐藏树"><svg width="26" height="24"><use href="#i-hidetree"/></svg></button>
            </div>
            <div class="tree-box">
                <ul class="tree">
                    <li><svg><use href="#i-boundary"/></svg>边界混合 2</li>
                    <li><svg><use href="#i-merge"/></svg>合并 9</li>
                    <li><svg><use href="#i-style"/></svg>样式 8</li>
                    <li><svg><use href="#i-copy"/></svg>复制 7</li>
                    <li><svg><use href="#i-style"/></svg>样式 9</li>
                    <li class="off"><svg><use href="#i-boundaryoff"/></svg>边界混合 3</li>
                    <li><svg><use href="#i-style"/></svg>样式 16</li>
                    <li><svg><use href="#i-plane"/></svg>DTM7</li>
                    <li><svg><use href="#i-trim"/></svg>修剪 6</li>
                    <li><svg><use href="#i-remove"/></svg>移除 2</li>
                    <li><svg><use href="#i-style"/></svg>样式 15</li>
                    <li><svg><use href="#i-extend"/></svg>延伸 3</li>
                    <li><svg><use href="#i-extend"/></svg>延伸 4</li>
                    <li class="off parent"><svg><use href="#i-extrudeoff"/></svg>拉伸 6</li>
                    <li><svg><use href="#i-trim"/></svg>修剪 4</li>
                    <li><svg><use href="#i-trim"/></svg>修剪 5</li>
                    <li><svg><use href="#i-style"/></svg>样式 11</li>
                    <li class="off"><svg><use href="#i-boundaryoff"/></svg>边界混合 1</li>
                    <li class="parent"><svg><use href="#i-fill"/></svg>填充 1</li>
                    <li><svg><use href="#i-merge"/></svg>合并 14</li>
                    <li><svg><use href="#i-merge"/></svg>合并 15</li>
                    <li><svg><use href="#i-merge"/></svg>合并 16</li>
                    <li><svg><use href="#i-merge"/></svg>合并 17</li>
                    <li><svg><use href="#i-round"/></svg>倒圆角 2</li>
                    <li><svg><use href="#i-solid"/></svg>实体化 1</li>
                    <li><svg><use href="#i-insert"/></svg>在此插入</li>
                </ul>
                <div class="scrollbar">
                    <button aria-label="向上滚动"><i class="caret up"></i></button>
                    <div class="track"><div class="thumb"></div></div>
                    <button aria-label="向下滚动"><i class="caret"></i></button>
                </div>
            </div>
        </aside>

        <div class="canvas">
            <div class="view-toolbar">
                <button aria-label="重新调整"><svg><use href="#i-refit"/></svg></button>
                <button aria-label="放大"><svg><use href="#i-zoomin"/></svg></button>
                <button aria-label="缩小"><svg><use href="#i-zoomout"/></svg></button>
                <button aria-label="重画"><svg><use href="#i-repaint"/></svg></button>
                <button class="more" aria-label="渲染"><svg><use href="#i-shade"/></svg></button>
                <button class="more" aria-label="显示样式"><svg><use href="#i-bluecube"/></svg></button>
                <button class="more" aria-label="已保存方向"><svg><use href="#i-saved"/></svg></button>
                <button aria-label="视图管理器"><svg><use href="#i-viewsmall"/></svg></button>
                <button aria-label="视图法向"><svg><use href="#i-cubein"/></svg></button>
                <button aria-label="视图定向"><svg><use href="#i-cubein2"/></svg></button>
                <button class="more" aria-label="基准显示"><svg><use href="#i-datums"/></svg></button>
                <button aria-label="平面"><svg><use href="#i-planeeye"/></svg></button>
                <button aria-label="轴"><svg><use href="#i-axiseye"/></svg></button>
                <button aria-label="点"><svg><use href="#i-pointeye"/></svg></button>
                <button aria-label="坐标系"><svg><use href="#i-csyseye"/></svg></button>
                <button aria-label="注释"><svg><use href="#i-noteeye"/></svg></button>
                <button aria-label="旋转中心"><svg><use href="#i-triad"/></svg></button>
            </div>

            <!-- shaded part -->
            <svg class="model" width="254" height="563" viewBox="0 0 254 563">
                <defs>
                    <clipPath id="body-clip"><rect width="254" height="563" rx="29"/></clipPath>
                    <linearGradient id="m-face" x1="0" y1="0" x2="1" y2="0">
                        <stop offset="0" stop-color="#000"/><stop offset=".1" stop-color="#040404"/><stop offset=".15" stop-color="#333"/><stop offset=".24" stop-color="#4a4a4a"/>
                        <stop offset=".78" stop-color="#4a4a4a"/><stop offset=".86" stop-color="#6a6a6a"/><stop offset=".905" stop-color="#b4b4b4"/><stop offset=".93" stop-color="#bcbcbc"/><stop offset=".955" stop-color="#222"/><stop offset=".965" stop-color="#000"/>
                    </linearGradient>
                    <linearGradient id="m-vert" x1="0" y1="0" x2="0" y2="1">
                        <stop offset="0" stop-color="#000"/><stop offset=".02" stop-color="#000" stop-opacity=".75"/><stop offset=".05" stop-color="#000" stop-opacity=".25"/><stop offset=".1" stop-color="#000" stop-opacity="0"/>
                        <stop offset=".88" stop-color="#fff" stop-opacity="0"/><stop offset=".93" stop-color="#fff" stop-opacity=".06"/><stop offset=".965" stop-color="#fff" stop-opacity=".16"/><stop offset=".975" stop-color="#000" stop-opacity=".7"/><stop offset=".985" stop-color="#000"/>
                    </linearGradient>
                    <linearGradient id="m-ledge" x1="0" y1="0" x2="0" y2="1"><stop offset="0" stop-color="#000"/><stop offset=".4" stop-color="#222"/><stop offset="1" stop-color="#aaa"/></linearGradient>
                    <linearGradient id="m-rim" gradientUnits="userSpaceOnUse" x1="100" y1="0" x2="150" y2="0"><stop offset="0" stop-color="#222"/><stop offset="1" stop-color="#ccc"/></linearGradient>
                    <filter id="b1" x="-20" y="-20" width="300" height="610" filterUnits="userSpaceOnUse"><feGaussianBlur stdDeviation="1.500"/></filter>
                    <filter id="b2" x="-20" y="-20" width="300" height="610" filterUnits="userSpaceOnUse"><feGaussianBlur stdDeviation="3"/></filter>
                    <filter id="b4" x="-20" y="-20" width="300" height="610" filterUnits="userSpaceOnUse"><feGaussianBlur stdDeviation="4"/></filter>
                </defs>
                <g clip-path="url(#body-clip)" stroke-linecap="round">
                    <rect width="254" height="563" fill="url(#m-face)"/>
                    <rect width="254" height="563" fill="url(#m-vert)"/>
                    <path d="M0 0H128V126Q124 146 102 148H0z" fill="#000" filter="url(#b4)"/>
                    <path d="M36 156H100Q132 153 132 120V34" fill="none" stroke="#777" stroke-width="9" filter="url(#b2)"/>
                    <path d="M132 36V120" fill="none" stroke="#ddd" stroke-width="6" filter="url(#b2)"/>
                    <path d="M106 151Q126 145 131 126" fill="none" stroke="#fff" stroke-width="6" filter="url(#b2)"/>
                    <path d="M0 0V563H14V140L28 124V0z" fill="#000"/>
                    <rect x="3" y="0" width="246" height="560" rx="29" fill="none" stroke="#000" stroke-width="12" filter="url(#b1)"/>
                    <path d="M34 8H112Q104 14 100 25H42z" fill="url(#m-ledge)" filter="url(#b1)"/>
                    <path d="M102 20Q112 9 136 9H226" fill="none" stroke="url(#m-rim)" stroke-width="5" filter="url(#b1)"/>
                    <path d="M25 11L40 26" stroke="#eee" stroke-width="9" filter="url(#b2)"/>
                    <path d="M12 30L21 46V120Q15 124 12 134L10 112z" fill="#fff" filter="url(#b1)"/>
                    <path d="M15 44V112" stroke="#fff" stroke-width="6" filter="url(#b1)"/>
                    <path d="M13 124Q7 140 8 164V532L10 540" fill="none" stroke="#fff" stroke-width="6" filter="url(#b1)"/>
                    <path d="M237 526Q238 540 231 544" fill="none" stroke="#fff" stroke-width="6" filter="url(#b2)"/>
                    <path d="M249 0V563M0 562H254" stroke="#000" stroke-width="13"/>
                </g>
                <rect x="22" y="24" width="96" height="116" rx="22" fill="#4a4a4a" stroke="#151515"/>
                <path d="M118 46V118Q117 134 103 139" fill="none" stroke="#bbb"/>
            </svg>
        </div>
    </main>

    <footer class="statusbar">
        <button class="pressed" aria-label="模型树"><svg width="20" height="22"><use href="#i-tree"/></svg></button>
        <button aria-label="浏览器"><svg width="20" height="20"><use href="#i-globe"/></svg></button>
        <button aria-label="全屏"><svg width="20" height="20"><use href="#i-browser"/></svg></button>
        <p class="message">已经取消插入模式。</p>
        <div class="find">
            <button aria-label="查找"><svg width="20" height="20"><use href="#i-binoc"/></svg></button>
            <button class="find-drop" aria-label="查找选项"><i class="caret"></i></button>
        </div>
        <div class="filter">
            <select aria-label="过滤器"><option>几何</option></select>
            <i class="caret"></i>
        </div>
    </footer>

    <div class="watermark">
        <svg width="60" height="58" viewBox="0 0 60 58"><ellipse cx="22" cy="24" rx="24" ry="14" transform="rotate(48 22 24)" fill="none" stroke="#b3c0cf" stroke-width="2"/><path d="M3 14Q6 3 18 5Q28 7 36 18" fill="none" stroke="#9fb0c4" stroke-width="4"/><path d="M44 19Q58 20 53 38Q46 54 32 52" fill="none" stroke="#e7a3a9" stroke-width="5"/><path d="M44 19Q32 20 30 34T36 50" fill="none" stroke="#ebc1c5" stroke-width="2"/></svg>
        <div>
            <strong>野火论坛</strong>
            <span>www.proewildfire.cn</span>
        </div>
    </div>
</div>

</body>
</html>
```
FILE: styles.css
```css
* {
    box-sizing: border-box;
}

body {
    margin: 0;
    font-family: "Open Sans", "Noto Sans CJK SC", sans-serif;
    font-size: 15px;
    line-height: 20px;
    color: #444;
}

h1, h2, h3, p, ul {
    margin: 0;
    padding: 0;
    font-weight: normal;
}

button {
    padding: 0;
    border: 0;
    background: none;
    font: inherit;
    color: inherit;
}

button:disabled {
    color: #aaa;
}

svg {
    display: block;
    flex: none;
}

.sprite {
    position: absolute;
    width: 0;
    height: 0;
}

.caret {
    display: inline-block;
    flex: none;
    border: 4px solid transparent;
    border-top: 5px solid #666;
    border-bottom: 0;
}

.caret.up {
    border-top: 0;
    border-bottom: 5px solid #999;
}

.window {
    position: relative;
    display: flex;
    flex-direction: column;
    height: 100vh;
    min-height: 600px;
    border: 5px solid #9f9f9f;
    background: #edeff1;
    overflow: hidden;
}

/* title bar */
.titlebar {
    display: flex;
    align-items: center;
    height: 32px;
    padding-bottom: 3px;
    background: #e3e3e3;
}

.app-icon {
    width: 48px;
    height: 26px;
    padding: 2px 0 0 14px;
    border-right: 1px solid #aaa;
}

.titlebar h1 {
    flex: 1;
    padding-left: 42px;
    font-size: 17px;
    text-align: center;
    color: #222;
}

.window-buttons {
    display: flex;
    gap: 21px;
    padding-right: 14px;
}

/* ribbon tabs */
.tabs {
    display: flex;
    align-items: flex-end;
    height: 34px;
    background: #e3e3e3;
    border-bottom: 1px solid #c4c6c8;
}

.tab {
    width: 85px;
    height: 33px;
    padding-bottom: 3px;
    background: #cfd2d4;
    border-right: 1px solid #e6e6e6;
    font-size: 18px;
    color: #555;
}

.tab-file {
    width: 98px;
    background: #696969;
    border: 0;
    color: #fff;
}

.tab.active {
    height: 34px;
    margin-bottom: -1px;
    background: #f8f8f8;
    border-top: 1px solid #999;
    color: #222;
}

.tab-wide {
    width: 121px;
}

.tab-long {
    width: 160px;
}

.tab-tools {
    display: flex;
    align-items: center;
    gap: 10px;
    height: 28px;
    margin: 0 5px 0 auto;
    align-self: flex-start;
}

/* ribbon */
.ribbon {
    display: flex;
    background: #f8f8f8;
    border-bottom: 2px solid #9a9a9a;
}

.group {
    display: flex;
    flex-direction: column;
    border-right: 1px solid #bcbcbc;
}

.filler {
    flex: 1;
    border: 0;
}

.group-body {
    display: flex;
    height: 104px;
    padding-top: 7px;
}

.group-look {
    padding-left: 4px;
    padding-right: 4px;
}

.group-display {
    padding-left: 1px;
    padding-right: 6px;
}

.group h2 {
    display: flex;
    justify-content: center;
    align-items: center;
    gap: 5px;
    height: 29px;
    background: #edeff0;
    font-size: 15px;
}

.big {
    display: flex;
    flex-direction: column;
    align-items: center;
    white-space: nowrap;
}

.big svg {
    width: 40px;
    height: 40px;
    margin-bottom: 10px;
}

.big .caret {
    margin-left: 4px;
    vertical-align: 3px;
}

.big .caret.below {
    margin: 6px 0 0;
}

.w50 { width: 50px; }
.w54 { width: 54px; }
.w60 { width: 60px; }
.w66 { width: 66px; }
.w68 { width: 68px; }
.w74 { width: 74px; }

.rows {
    display: flex;
    flex-direction: column;
    gap: 14px;
}

.rows button {
    display: flex;
    align-items: center;
    gap: 5px;
}

.rows svg {
    width: 20px;
    height: 20px;
}

.rows-vis {
    width: 84px;
    padding-left: 4px;
}

.rows .caret {
    margin-left: 3px;
    border-top-color: #aaa;
}

.rows .caret.dark {
    border-top-color: #666;
}

.rows-zoom {
    width: 99px;
    padding-left: 3px;
}

.divider {
    width: 1px;
    height: 82px;
    margin: 4px 8px 0 0;
    background: #ddd;
}

.group-windows .divider {
    margin-left: 4px;
}

.datum-grid {
    display: grid;
    grid-template-columns: repeat(5, 30px);
    align-content: start;
    row-gap: 20px;
    height: 104px;
    padding: 12px 3px 0;
}

.datum-grid button {
    display: grid;
    place-items: center;
    height: 30px;
    border: 1px solid transparent;
}

.datum-grid svg {
    width: 20px;
    height: 20px;
}

.pressed,
.datum-grid .pressed {
    background: #dcdfe1;
    border: 1px solid #a8acaf;
}

/* quick access toolbar */
.quickbar {
    display: flex;
    align-items: center;
    height: 30px;
    padding-left: 10px;
}

.quickbar button {
    display: grid;
    place-items: center;
    width: 30px;
    height: 30px;
}

.quickbar svg {
    width: 20px;
    height: 20px;
}

.quickbar .drop {
    width: 17px;
}

.quickbar .redo {
    color: #b0b3b5;
}

.quickbar .redo svg {
    transform: scaleX(-1);
}

.redo .caret {
    border-top-color: #b0b3b5;
}

.quickbar .customize {
    border-left: 1px solid #aaa;
}

/* main area */
main {
    display: flex;
    flex: 1;
    min-height: 0;
}

.navigator {
    display: flex;
    flex-direction: column;
    width: 424px;
    border-right: 2px solid #9f9f9f;
    padding-bottom: 6px;
}

.nav-tabs {
    display: flex;
    height: 36px;
    border-top: 2px solid #9f9f9f;
    background: #cfd1d3;
}

.nav-tab {
    display: flex;
    align-items: center;
    gap: 6px;
    padding-bottom: 1px;
    background: #dcdfe0;
    border-right: 1px solid #9f9f9f;
    border-bottom: 1px solid #9f9f9f;
    color: #777;
    white-space: nowrap;
}

.nav-tab.current {
    width: 94px;
    padding-left: 11px;
    background: #edeff1;
    border-bottom: 0;
    color: #444;
}

.nav-folders {
    width: 139px;
    padding-left: 9px;
    gap: 5px;
}

.nav-fav {
    width: 94px;
    padding-left: 9px;
    gap: 7px;
}

.nav-head {
    display: flex;
    align-items: center;
    height: 36px;
    padding: 0 11px 0 35px;
    gap: 15px;
}

.nav-head h3 {
    flex: 1;
    font-size: 15px;
    font-weight: bold;
}

.nav-head button {
    display: flex;
    align-items: center;
    gap: 12px;
}

.tree-box {
    display: flex;
    flex: 1;
    min-height: 0;
    margin: 0 8px 0 10px;
    background: #fff;
    border-top: 1px solid #d5d7d9;
    overflow: hidden;
}

.tree {
    flex: 1;
    margin-top: -9px;
    list-style: none;
}

.tree li {
    display: flex;
    align-items: center;
    gap: 6px;
    height: 26px;
    padding-left: 29px;
}

.tree svg {
    width: 20px;
    height: 20px;
}

.tree .off {
    color: #bbb;
}

.tree .parent {
    padding-left: 11px;
}

.tree .parent::before {
    content: "";
    margin-right: 3px;
    border: 5px solid transparent;
    border-left: 9px solid #888;
    border-right: 0;
}

.scrollbar {
    display: flex;
    flex-direction: column;
    width: 18px;
    background: #dcdfe1;
}

.scrollbar button {
    display: grid;
    place-items: center;
    height: 18px;
    background: #fafafa;
    border: 1px solid #c4c7c9;
}

.scrollbar .caret {
    border-top-color: #999;
}

.track {
    display: flex;
    flex: 1;
    align-items: flex-end;
}

.thumb {
    width: 100%;
    height: 27%;
    background: #fafafa;
    border: 1px solid #bfc3c6;
}

.canvas {
    position: relative;
    flex: 1;
    padding-top: 7px;
    background: linear-gradient(#fcfdff, #ecedef);
}

.view-toolbar {
    display: grid;
    grid-template-columns: repeat(17, 1fr);
    width: 641px;
    height: 42px;
    margin: 0 auto;
    padding: 0 2px 2px;
    background: #f8f8f9;
    border: 1px solid #999;
}

.view-toolbar button {
    position: relative;
    display: grid;
    place-items: center;
}

.view-toolbar svg {
    width: 25px;
    height: 25px;
}

.view-toolbar .more::after {
    content: "";
    position: absolute;
    right: 5px;
    bottom: 4px;
    border: 2px solid #444;
    border-top-color: transparent;
    border-left-color: transparent;
}

.model {
    position: absolute;
    left: 456px;
    top: 98px;
}

/* status bar */
.statusbar {
    display: flex;
    align-items: center;
    height: 42px;
    padding: 1px 22px 0 7px;
    border-top: 2px solid #9a9a9a;
}

.statusbar button {
    display: grid;
    place-items: center;
    width: 30px;
    height: 26px;
}

.statusbar .pressed {
    width: 26px;
    margin-right: 2px;
}

.message {
    flex: 1;
    height: 28px;
    margin-left: 8px;
    padding-left: 7px;
    border-left: 1px solid #aaa;
    border-right: 1px solid #aaa;
    font-size: 13px;
    line-height: 20px;
}

.message::before {
    content: "";
    display: inline-block;
    width: 6px;
    height: 6px;
    margin-right: 6px;
    border-radius: 3px;
    background: #1f5f80;
    vertical-align: 3px;
}

.find {
    display: flex;
    height: 32px;
    margin: 0 119px 0 48px;
    padding: 1px 2px;
    border: solid #aaa;
    border-width: 0 1px;
}

.statusbar .find button {
    width: 34px;
    height: 30px;
    background: #fafbfc;
    border: 1px solid #b5b8ba;
}

.statusbar .find .find-drop {
    width: 18px;
    border-left: 0;
}

.filter {
    position: relative;
    width: 216px;
}

.filter select {
    appearance: none;
    display: block;
    width: 100%;
    height: 28px;
    padding: 0 8px;
    background: #fafbfc;
    border: 1px solid #999;
    border-radius: 0;
    font: inherit;
    color: #444;
}

.filter .caret {
    position: absolute;
    right: 6px;
    top: 12px;
}

.watermark {
    position: absolute;
    right: 0;
    bottom: 0;
    display: flex;
    width: 206px;
    height: 62px;
    padding-top: 3px;
    background: rgba(255, 255, 255, 0.5);
    pointer-events: none;
}

.watermark svg {
    margin-right: -2px;
}

.watermark strong {
    display: block;
    margin-left: 12px;
    font-size: 29px;
    line-height: 34px;
    color: #9bd3b0;
}

.watermark span {
    display: block;
    font-size: 15px;
    line-height: 22px;
    color: #bfe0dc;
}
```
